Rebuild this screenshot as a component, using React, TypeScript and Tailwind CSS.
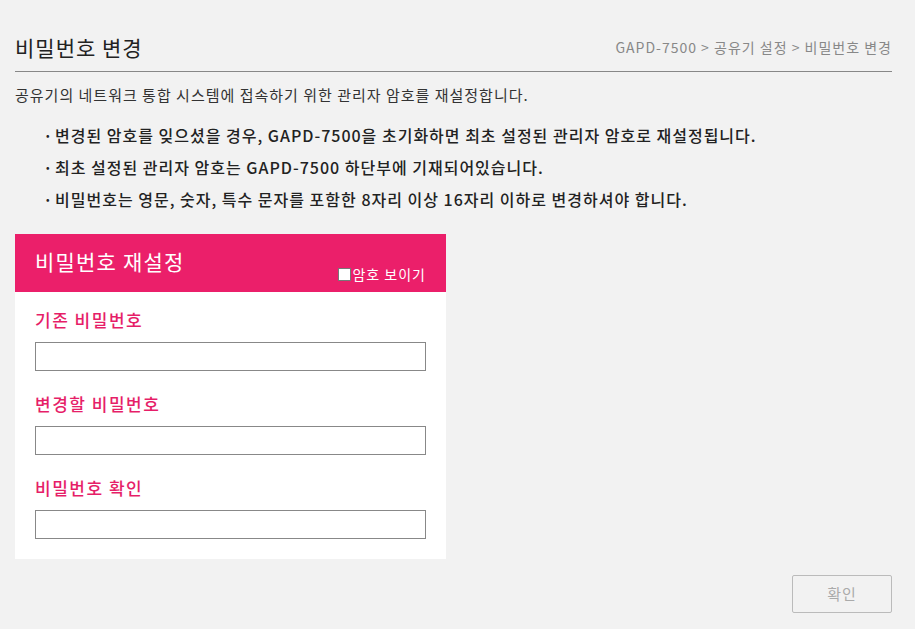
import { useState } from 'react'

const font = { fontFamily: '"Noto Sans CJK KR", "Noto Sans", sans-serif' }

const notes = [
  '변경된 암호를 잊으셨을 경우, GAPD-7500을 초기화하면 최초 설정된 관리자 암호로 재설정됩니다.',
  '최초 설정된 관리자 암호는 GAPD-7500 하단부에 기재되어있습니다.',
  '비밀번호는 영문, 숫자, 특수 문자를 포함한 8자리 이상 16자리 이하로 변경하셔야 합니다.',
]

const fields = ['기존 비밀번호', '변경할 비밀번호', '비밀번호 확인']

export default function App() {
  const [show, setShow] = useState(false)

  return (
    <div className="min-h-[629px] w-full bg-[#f2f2f2] pl-[15px] pr-[23px]" style={font}>
      {/* 상단 제목 */}
      <div className="flex h-[72px] items-center justify-between border-b border-[#888] pt-[22px]">
        <h1 className="text-[21px] leading-[28px] tracking-[1px] text-[#222]">비밀번호 변경</h1>
        <div className="text-[14px] leading-[20px] tracking-[1px] text-[#888]">
          GAPD-7500 &gt; 공유기 설정 &gt; 비밀번호 변경
        </div>
      </div>

      <p className="mt-[13px] text-[15px] leading-[20px] tracking-[1px] text-[#333]">
        공유기의 네트워크 통합 시스템에 접속하기 위한 관리자 암호를 재설정합니다.
      </p>

      <ul className="mt-[14px] pl-[31px]">
        {notes.map((n) => (
          <li key={n} className="flex items-center text-[16px] font-medium leading-[32px] tracking-[1px] text-[#222]">
            <span className="w-[9px] text-[10px]">•</span>
            {n}
          </li>
        ))}
      </ul>

      {/* 비밀번호 재설정 카드 */}
      <div className="mt-[19px] w-[431px] bg-white">
        <div className="flex h-[58px] justify-between bg-[#eb1f6a] px-[20px]">
          <div className="pt-[13px] text-[21px] leading-[28px] tracking-[1.2px] text-white">비밀번호 재설정</div>
          <label className="flex cursor-pointer items-center self-end pb-[8px] text-[14px] leading-[20px] tracking-[1px] text-white">
            <span
              onClick={() => setShow(!show)}
              className="mr-[1px] h-[13px] w-[13px] border border-[#777] bg-white"
            />
            암호 보이기
          </label>
        </div>
        <div className="px-[20px] pb-[20px] pt-[16px]">
          {fields.map((f, i) => (
            <div key={f} className={i > 0 ? 'mt-[21px]' : ''}>
              <div className="text-[17px] font-medium leading-[24px] tracking-[1.5px] text-[#e61e68]">{f}</div>
              <input
                type={show ? 'text' : 'password'}
                className="mt-[10px] block h-[29px] w-[391px] border border-[#888] bg-white outline-none"
              />
            </div>
          ))}
        </div>
      </div>

      <div className="mt-[16px] flex justify-end">
        <button className="h-[38px] w-[100px] rounded-[2px] border border-[#bbb] text-[15px] tracking-[1px] text-[#aaa]">
          확인
        </button>
      </div>
    </div>
  )
}
